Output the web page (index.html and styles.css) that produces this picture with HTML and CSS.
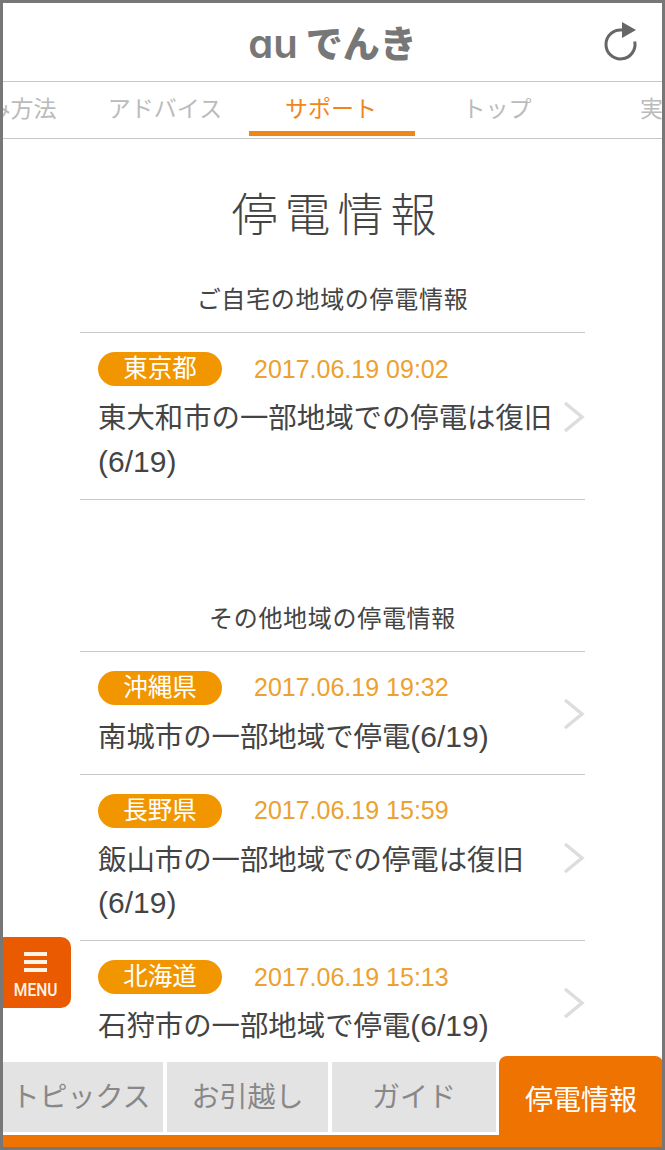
FILE: index.html
```html
<!DOCTYPE html>
<html lang="ja">
<head>
  <meta charset="UTF-8" />
  <meta name="viewport" content="width=device-width, initial-scale=1.0"/>
  <title>auでんき | 停電情報</title>
  <link rel="stylesheet" href="styles.css">
</head>
<body>
  <div class="frame">
    <header class="header">
      <h1 class="logo"><span class="logo-au">au</span>でんき</h1>
      <button class="reload" aria-label="更新">
        <svg width="36" height="42" viewBox="0 0 36 42">
          <path d="M20 10A14.5 14.5 0 1 0 32.7 21.5" fill="none" stroke="#666" stroke-width="3"/>
          <path d="M20 2l14 8-14 8z" fill="#666"/>
        </svg>
      </button>
    </header>

    <nav class="tabs">
      <a class="tab">申込み方法</a>
      <a class="tab">アドバイス</a>
      <a class="tab active">サポート</a>
      <a class="tab">トップ</a>
      <a class="tab">実績</a>
    </nav>

    <main class="content">
      <h2 class="title">停電情報</h2>

      <section class="area">
        <h3 class="area-title">ご自宅の地域の停電情報</h3>
        <ul class="news">
          <li class="news-item">
            <div class="news-meta"><span class="pref">東京都</span><time class="date">2017.06.19 09:02</time></div>
            <p class="news-text">東大和市の一部地域での停電は復旧<span class="day">(6/19)</span></p>
            <svg class="chevron" width="22" height="32" viewBox="0 0 22 32"><path d="M2 2l17 14L2 30" /></svg>
          </li>
        </ul>
      </section>

      <section class="area area-other">
        <h3 class="area-title">その他地域の停電情報</h3>
        <ul class="news">
          <li class="news-item">
            <div class="news-meta"><span class="pref">沖縄県</span><time class="date">2017.06.19 19:32</time></div>
            <p class="news-text">南城市の一部地域で停電<span class="day">(6/19)</span></p>
            <svg class="chevron" width="22" height="32" viewBox="0 0 22 32"><path d="M2 2l17 14L2 30" /></svg>
          </li>
          <li class="news-item">
            <div class="news-meta"><span class="pref">長野県</span><time class="date">2017.06.19 15:59</time></div>
            <p class="news-text">飯山市の一部地域での停電は復旧<span class="day">(6/19)</span></p>
            <svg class="chevron" width="22" height="32" viewBox="0 0 22 32"><path d="M2 2l17 14L2 30" /></svg>
          </li>
          <li class="news-item">
            <div class="news-meta"><span class="pref">北海道</span><time class="date">2017.06.19 15:13</time></div>
            <p class="news-text">石狩市の一部地域で停電<span class="day">(6/19)</span></p>
            <svg class="chevron" width="22" height="32" viewBox="0 0 22 32"><path d="M2 2l17 14L2 30" /></svg>
          </li>
        </ul>
      </section>
    </main>

    <button class="menu">
      <svg width="23" height="20" viewBox="0 0 23 20"><path d="M0 0h23v4H0zM0 8h23v4H0zM0 16h23v4H0z" fill="#fff3e6"/></svg>
      <span class="menu-label">MENU</span>
    </button>

    <footer class="bottom">
      <div class="bottom-tabs">
        <a class="bottom-tab first">トピックス</a>
        <a class="bottom-tab">お引越し</a>
        <a class="bottom-tab">ガイド</a>
        <a class="bottom-tab active">停電情報</a>
      </div>
    </footer>
  </div>
</body>
</html>
```

FILE: styles.css
```css
:root {
  --orange: #ee7300;
  --amber: #f29600;
  --date: #eca130;
  --line: #c8c8c8;
  --text: #444;
}

* {
  margin: 0;
  padding: 0;
  box-sizing: border-box;
}

html, body {
  height: 100%;
  overflow: hidden;
}

body {
  font-family: "Liberation Sans", "Noto Sans CJK JP", sans-serif;
  color: var(--text);
  background: #fff;
}

.frame {
  position: relative;
  height: 1150px;
  border: 3px solid #777;
  display: flex;
  flex-direction: column;
  overflow: hidden;
}

.header {
  position: relative;
  flex: none;
  height: 79px;
  display: flex;
  align-items: center;
  justify-content: center;
  border-bottom: 1px solid var(--line);
}

.logo {
  margin-top: 3px;
  font-family: "Noto Sans CJK JP", sans-serif;
  font-size: 37px;
  font-weight: 900;
  color: #777;
  line-height: 1;
}

.logo-au {
  font-family: "Inter", sans-serif;
  font-feature-settings: "cv11";
  font-size: 40px;
  font-weight: 600;
  margin-right: 8px;
}

.reload {
  position: absolute;
  right: 24px;
  top: 17px;
  background: none;
  border: 0;
  line-height: 0;
}

.tabs {
  flex: none;
  height: 57px;
  padding-right: 2px;
  display: flex;
  justify-content: center;
  border-bottom: 1px solid var(--line);
  overflow: hidden;
}

.tab {
  flex: none;
  width: 166px;
  height: 54px;
  padding-right: 1px;
  line-height: 54px;
  text-align: center;
  font-size: 23px;
  white-space: nowrap;
  color: #bbb;
}

.tab.active {
  color: #f0851a;
  border-bottom: 5px solid #f0851a;
}

.content {
  flex: 1;
  min-height: 0;
  overflow: hidden;
  padding: 0 77px;
}

.title {
  margin-top: 48px;
  padding-left: 10px;
  font-size: 46px;
  font-weight: 300;
  line-height: 56px;
  letter-spacing: 7px;
  text-align: center;
}

.area-title {
  margin-top: 40px;
  font-size: 24px;
  font-weight: 400;
  line-height: 34px;
  letter-spacing: 0.7px;
  text-align: center;
  color: #444;
}

.area-other {
  margin-top: 102px;
}

.news {
  list-style: none;
  margin-top: 15px;
  border-bottom: 1px solid var(--line);
}

.area-other .news {
  border-bottom: 0;
}

.news-item {
  position: relative;
  border-top: 1px solid var(--line);
  padding: 19px 30px 14.5px 18px;
}

.news-meta {
  display: flex;
  align-items: center;
  gap: 32px;
}

.pref {
  width: 124px;
  height: 34px;
  border-radius: 17px;
  background: var(--amber);
  color: #fff;
  font-size: 24.5px;
  line-height: 34px;
  text-align: center;
}

.date {
  font-size: 25px;
  color: var(--date);
}

.news-text {
  margin-top: 11px;
  font-size: 28.4px;
  line-height: 43.5px;
}

.day {
  font-size: 30px;
  line-height: 1;
}

.chevron {
  position: absolute;
  right: 0;
  top: 50%;
  margin-top: -15px;
}

.chevron path {
  fill: none;
  stroke: #ddd;
  stroke-width: 3.5;
}

.menu {
  position: absolute;
  left: 0;
  top: 934px;
  width: 68px;
  height: 71px;
  padding: 15px 3px 0 0;
  background: #ea5a00;
  border: 0;
  border-radius: 0 10px 10px 0;
  color: #fff3e6;
  display: flex;
  flex-direction: column;
  align-items: center;
  gap: 7px;
}

.menu-label {
  font-family: "Roboto", sans-serif;
  font-size: 19px;
  font-weight: 500;
  line-height: 22px;
  transform: scaleX(0.82);
}

.bottom {
  flex: none;
  height: 91px;
  background: linear-gradient(#fff 79px, var(--orange) 79px);
  overflow: hidden;
}

.bottom-tabs {
  display: grid;
  grid-template-columns: 160px 161px 164px 163px;
  column-gap: 4px;
  align-items: start;
  height: 91px;
}

.bottom-tab {
  height: 70px;
  margin-top: 6px;
  background: #e3e3e3;
  color: #888;
  font-size: 28px;
  line-height: 71px;
  text-align: center;
  white-space: nowrap;
}

.bottom-tab.first {
  padding-right: 4px;
}

.bottom-tab.active {
  height: 91px;
  margin-top: 0;
  margin-left: -1px;
  background: var(--orange);
  color: #fff;
  border-radius: 8px 8px 0 0;
  line-height: 90px;
}
```
